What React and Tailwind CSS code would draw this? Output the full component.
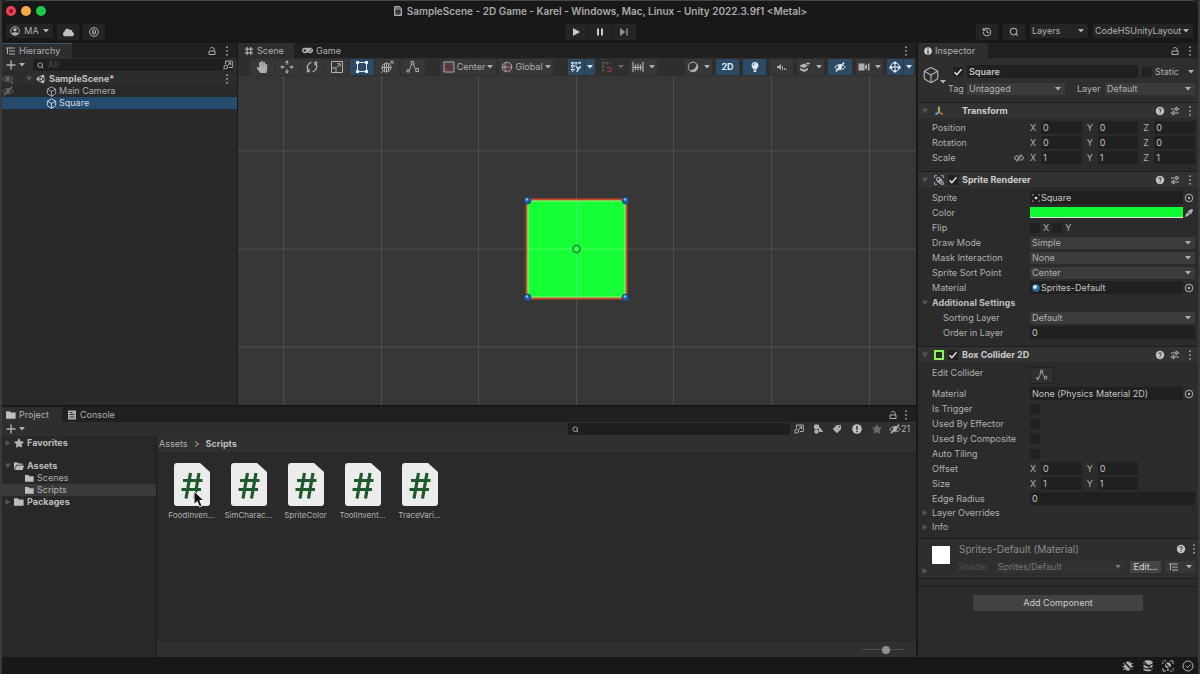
import React from "react";
import { Box, History, Search } from "lucide-react";
import { FaHandPaper, FaUnity, FaStar, FaGamepad, FaTag, FaLightbulb, FaEyeDropper, FaCloud } from "react-icons/fa";

const cx = (...c) => c.filter(Boolean).join(" ");

/* ---------- glyphs ---------- */

const Svg = ({ size = "size-3", box = "0 0 12 12", className, children }) => (
  <svg viewBox={box} className={cx("shrink-0", size, className)} fill="none" stroke="currentColor" strokeWidth="1" aria-hidden="true">
    {children}
  </svg>
);

const Caret = ({ className }) => (
  <Svg size="h-1 w-1.5" box="0 0 6 4" className={className}>
    <path d="M0 0h6L3 3.6z" fill="currentColor" stroke="none" />
  </Svg>
);

const Fold = ({ open, className }) => (
  <Svg size="size-1.5" box="0 0 6 6" className={cx("text-[#555555]", className)}>
    <path d={open ? "M0 .5h6L3 5.5z" : "M.5 0v6l5-3z"} fill="currentColor" stroke="none" />
  </Svg>
);

const Kebab = ({ className }) => (
  <Svg size="h-2.5 w-1" box="0 0 3 9" className={className}>
    <path d="M.8 .5h1.4v1.4H.8zM.8 3.8h1.4v1.4H.8zM.8 7.1h1.4v1.4H.8z" fill="currentColor" stroke="none" />
  </Svg>
);

const Lock = () => (
  <Svg size="size-2.5" box="0 0 10 10">
    <path d="M2 5h6v3.5H2z M7.2 5V3.2C7.2 1.2 3.4 1 3 2.6" />
  </Svg>
);

const Help = () => (
  <Svg size="size-2.5" box="0 0 10 10">
    <circle cx="5" cy="5" r="4.2" fill="#c4c4c4" stroke="none" />
    <path d="M3.7 3.9c0-1.7 2.7-1.6 2.6 0 0 .9-1.3 1-1.3 2.1M5 6.8v1" stroke="#2d2d2d" />
  </Svg>
);

const Preset = () => (
  <Svg size="size-2.5" box="0 0 10 10">
    <path d="M1 3h5.500M6 1v4L9 3zM9 7H3.500M4 5v4L1 7z" />
  </Svg>
);

const Target = () => (
  <Svg size="size-2.5" box="0 0 10 10">
    <circle cx="5" cy="5" r="3.8" />
    <circle cx="5" cy="5" r="1.2" fill="currentColor" stroke="none" />
  </Svg>
);

const Folder = ({ open, size = "size-2.5" }) => (
  <Svg size={size} box="0 0 10 10" className="text-[#bdbdbd]">
    {open ? (
      <path d="M0 8.6V1.4h3.6l1 1.2h3.8v1.2H2.2L.9 7.6zM2.8 4.6H10L8.6 9H.9z" fill="currentColor" stroke="none" />
    ) : (
      <path d="M0 1.2h3.8l1 1.3H9.6v6.2H0z" fill="currentColor" stroke="none" />
    )}
  </Svg>
);

const EyeOff = ({ size = "size-3" }) => (
  <Svg size={size} box="0 0 12 12">
    <path d="M.8 6.4C3 2.6 9 2.6 11.2 6 9 9.6 3 9.600 .8 6.400z" />
    <circle cx="6" cy="6" r="1.700" fill="currentColor" />
    <path d="M1.800 10.400 10.200 1.600" strokeWidth="1.400" />
  </Svg>
);

const EyePick = () => (
  <Svg>
    <path d="M.8 6C3 2.600 8.600 2.600 10.800 6 8.600 9 3 9 .8 6z" />
    <circle cx="5.800" cy="5.800" r="1.600" fill="currentColor" />
    <path d="M8.500 9h3M10 9v2" />
  </Svg>
);

const PickWindow = () => (
  <Svg size="size-2.5" box="0 0 10 10">
    <path d="M2.500 4V1h6.800v6.500H6M4.600 5.600 7.400 2.900M5.200 2.800h2.300V5" />
    <circle cx="2.800" cy="7" r="1.900" />
    <path d="M1.400 8.400 .2 9.700" />
  </Svg>
);

const Nodes = ({ size = "size-3.5" }) => (
  <Svg size={size} box="0 0 14 14">
    <path d="M2.500 10.500C4.500 10 4.800 6 5.500 3.500M7.500 3.500C8 7 9 9 11 9.800" />
    <path d="M5.200 1.500h2.600v2.600H5.200zM9.800 8.500h2.700v3H9.800zM1 9.800h2.200V12H1z" fill="#353535" />
  </Svg>
);

const HashGrid = () => (
  <Svg size="size-2.5" box="0 0 10 10">
    <path d="M3.200 1v8M6.800 1v8M1 3.200h8M1 6.800h8" strokeWidth="1.200" />
  </Svg>
);

const Lines = () => (
  <Svg size="size-2.5" box="0 0 10 10">
    <path d="M0 2h9M3 5h6M3 8h6M1.500 2v6" />
  </Svg>
);

const MoveIcon = () => (
  <Svg size="size-3.5" box="0 0 14 14">
    <path d="M7 4.800V2M7 9.200V12M4.800 7H2M9.200 7H12" />
    <path d="M7 .3 9 2.800H5zM7 13.700 9 11.200H5zM.3 7l2.500-2v4zM13.700 7l-2.500-2v4z" fill="currentColor" stroke="none" />
  </Svg>
);

const RotateIcon = () => (
  <Svg size="size-3.5" box="0 0 14 14">
    <path d="M4 11.500C.8 8.600 2 3.600 6.500 2.200M10 2.500c3.200 2.900 2 7.900-2.500 9.300M4 8.800v2.900H1.400M10 5.200V2.300h2.600" strokeWidth="1.200" />
  </Svg>
);

const ScaleIcon = () => (
  <Svg size="size-3.5" box="0 0 14 14">
    <path d="M1.500 1.500h11v11h-11zM1.500 8h4.500v4.500M6.500 7.500 10 4M7.300 3.700h3v3" />
  </Svg>
);

const RectIcon = () => (
  <Svg size="size-3.5" box="0 0 14 14" className="text-[#dfe9f2]">
    <path d="M2.500 2.500h9v9h-9z" />
    <path d="M1 1h3v3H1zM10 1h3v3h-3zM1 10h3v3H1zM10 10h3v3h-3z" fill="currentColor" stroke="none" />
  </Svg>
);

const TransformTool = () => (
  <Svg size="size-3.5" box="0 0 14 14">
    <circle cx="6.500" cy="7.500" r="4.500" />
    <path d="M2 7.500h9M6.500 3v9M4.500 4v7M8.500 4v7M1 13l2-2M10 4l2.500-2.500M10.500 1.300H13V4" />
  </Svg>
);

const PivotIcon = () => (
  <Svg>
    <path d="M1 1h10v10H1z" />
    <path d="M2.500 9.500 9.500 2.500M3 3h6v6H3z" stroke="#8c3b40" />
  </Svg>
);

const GlobeIcon = ({ hot = "#8c3b40" }) => (
  <Svg>
    <circle cx="6" cy="6" r="4.800" />
    <path d="M1.200 6h9.600M6 1.200c-3 3-3 6.600 0 9.600" />
    <path d="M6 1.200c3 3 3 6.600 0 9.600M6 8h4M7 6v4.500" stroke={hot} />
  </Svg>
);

const GridSnap = () => (
  <Svg className="text-[#dfe9f2]">
    <path d="M1 2h10M1 5h5M1 8.500h4M2.500 1v10M6 1v3M9.500 1v2" strokeDasharray="1.500 .8" strokeWidth="1.300" />
    <path d="M6.200 5.200 8.300 8.200 10.600 5.200M8.300 8.200 6.800 11" strokeWidth="1.400" />
  </Svg>
);

const GridMagnet = () => (
  <Svg className="text-[#6a6a6a]">
    <path d="M1 2h9M1 5.500h3M1 9h3M2 1v10M5.500 1v3" strokeDasharray="1.300 1" />
    <path d="M6 6.500h2.500c2.500 0 2.500 4 0 4H6" stroke="#8c3b40" strokeWidth="1.400" />
  </Svg>
);

const Increment = () => (
  <Svg>
    <path d="M1 1v10M3.500 3.500v6M6 2.500v7M8.500 3.500v6M11 1v10M1.500 6.500h9" strokeWidth="1.200" />
  </Svg>
);

const ShadeIcon = () => (
  <Svg>
    <circle cx="6" cy="6" r="4.800" />
    <path d="M9.500 2.800C9.600 6.500 7 9.300 2.800 9.300c2.600 2.500 7 1.600 8-2.300C11.200 5.500 10.700 3.800 9.500 2.800z" fill="currentColor" stroke="none" />
  </Svg>
);

const AudioIcon = () => (
  <Svg size="size-2.5" box="0 0 10 10">
    <path d="M0 4h1.500L4 2v6L1.500 6H0zM5 4h1v4H5zM7 6h1v2H7zM9 7h1v1H9z" fill="currentColor" stroke="none" />
  </Svg>
);

const FxIcon = () => (
  <Svg>
    <path d="M1 4.500 5 2.500l3 1.500v1.500L5 7 1 5.500zM1 7l4 1.500L9 7v2L5 11 1 9z" fill="currentColor" stroke="none" />
    <path d="M7 2.500h4M9 1v3.500" />
  </Svg>
);

const CameraIcon = () => (
  <Svg>
    <path d="M.5 2.500h6v7h-6zM7 5l2-2v6L7 7zM10 2.500h1.500v7H10z" fill="currentColor" stroke="none" />
  </Svg>
);

const GizmoIcon = () => (
  <Svg className="text-[#dfe9f2]">
    <circle cx="6" cy="6" r="4.300" />
    <path d="M6 1.500v9M1.500 6h9" />
    <circle cx="6" cy="1.800" r="1.400" fill="currentColor" stroke="none" />
    <circle cx="1.800" cy="6.500" r="1.500" fill="currentColor" stroke="none" />
    <circle cx="10.200" cy="6.500" r="1.500" fill="currentColor" stroke="none" />
    <circle cx="6" cy="10.300" r="1.400" fill="currentColor" stroke="none" />
  </Svg>
);

/* ---------- building blocks ---------- */

const ToolButton = ({ label, className, children, on, plain }) => (
  <button
    type="button"
    aria-label={label}
    className={cx(
      "flex h-4 shrink-0 items-center justify-center",
      on ? "bg-[#2c4a63] text-[#dfe9f2]" : plain ? "" : "bg-[#373737]",
      className
    )}
  >
    {children}
  </button>
);

const SplitTool = ({ label, on, plain, dim, className, children }) => (
  <div className="flex">
    <ToolButton label={label} on={on} plain={plain} className={cx("w-4", className)}>{children}</ToolButton>
    <ToolButton label={label + " options"} on={on} plain={plain} className={cx("w-[11px]", on && "border-l border-[#24394b]", dim && "text-[#666666]")}>
      <Caret />
    </ToolButton>
  </div>
);

const Select = ({ id, value, label, className, tone = "bg-[#3b3b3b]", pad = "pl-0.5" }) => (
  <div className={cx("relative flex h-3 items-center", tone, className)}>
    <select id={id} aria-label={label} className={cx("h-full w-full appearance-none truncate bg-transparent pr-2.5 outline-none", pad)}>
      <option>{value}</option>
    </select>
    <Caret className="pointer-events-none absolute right-1" />
  </div>
);

const Check = ({ id, label, checked }) => (
  <span className="relative flex size-2.5 shrink-0 items-center justify-center">
    <input id={id} aria-label={label} type="checkbox" defaultChecked={checked} className="peer size-full appearance-none bg-[#212121]" />
    <svg viewBox="0 0 10 10" className="pointer-events-none absolute hidden size-2.5 peer-checked:block" fill="none" stroke="#e4e4e4" strokeWidth="1.400">
      <path d="M1.500 5.200 3.800 7.600 8.500 2.200" />
    </svg>
  </span>
);

const Row = ({ label, id, sub, extra, children }) => (
  <div className="flex h-[15px] items-center pr-[3px] pl-3.5">
    <div className={cx("flex w-[98px] shrink-0 items-center justify-between", sub && "pl-[11px]")}>
      <label htmlFor={id} className="whitespace-nowrap">{label}</label>
      {extra}
    </div>
    {children}
  </div>
);

const Field = ({ id, label, value }) => (
  <input id={id} aria-label={label} defaultValue={value} className="h-[13px] w-full min-w-0 bg-[#202020] px-0.5 text-[#c4c4c4] outline-none" />
);

const Axes = ({ id, name, values }) => (
  <div className="grid flex-1 grid-cols-3 gap-[5px]">
    {values.map((v, i) => (
      <div key={i} className="flex items-center">
        <span className="w-[11px] shrink-0">{"XYZ"[i]}</span>
        <Field id={i === 0 ? id : undefined} label={name + " " + "XYZ"[i]} value={v} />
      </div>
    ))}
  </div>
);

const ObjectField = ({ id, value, icon }) => (
  <div className="flex min-w-0 flex-1 items-center">
    <div className="flex h-[13px] min-w-0 flex-1 items-center bg-[#202020] pl-0.5">
      {icon}
      <input id={id} defaultValue={value} className="w-full min-w-0 bg-transparent text-[#c4c4c4] outline-none" />
    </div>
    <button type="button" aria-label={"Pick " + value} className="flex w-3 justify-center"><Target /></button>
  </div>
);

const ComponentHeader = ({ title, icon, check }) => (
  <div className="flex h-4 items-center border-t border-[#1d1d1d] bg-[#323232] pr-[5px] pl-1">
    <button type="button" aria-label={"Fold " + title} className="flex w-3"><Fold open /></button>
    <span className="flex w-3.5 justify-start">{icon}</span>
    <span className="flex w-3.5">{check && <Check label={title + " enabled"} checked />}</span>
    <h2 className="flex-1 font-bold text-[#cccccc]">{title}</h2>
    <div className="flex items-center gap-[5px]">
      <button type="button" aria-label="Help"><Help /></button>
      <button type="button" aria-label="Presets"><Preset /></button>
      <button type="button" aria-label="More" className="ml-0.5 flex w-1.5 justify-center"><Kebab /></button>
    </div>
  </div>
);

const Tab = ({ icon, label, active, className }) => (
  <button type="button" role="tab" aria-selected={!!active} className={cx("flex h-[15px] items-center gap-[3px] px-1", active ? "bg-[#2e2e2e]" : "", className)}>
    {icon}
    {label}
  </button>
);

/* ---------- panels ---------- */

function TopBar() {
  return (
    <header className="rounded-t-md border-t border-[#454545] bg-[#181818]">
      <div className="grid h-5 grid-cols-[1fr_auto_1fr] items-center">
        <div className="flex gap-[5px] pl-1">
          <button type="button" aria-label="Close" className="flex size-2.5 items-center justify-center rounded-full bg-[#ee4457]">
            <span className="size-1 rounded-full bg-[#8c1020]" />
          </button>
          <button type="button" aria-label="Minimise" className="size-2.5 rounded-full bg-[#f6ac45]" />
          <button type="button" aria-label="Zoom" className="size-2.5 rounded-full bg-[#1fc74b]" />
        </div>
        <h1 className="flex items-center gap-1 text-[10px] font-semibold text-[#aaaaaa]">
          <Svg size="size-2.5" box="0 0 10 10">
            <path d="M1.500 .5H6.500L8.500 2.500v7h-7z" fill="#777777" />
            <path d="M3 5 5 3.800 7 5v2L5 8.200 3 7zM5 6v2M3 5l2 1 2-1" stroke="#222222" />
          </Svg>
          SampleScene - 2D Game - Karel - Windows, Mac, Linux - Unity 2022.3.9f1 &lt;Metal&gt;
        </h1>
      </div>
      <div className="grid h-[22px] grid-cols-[1fr_auto_1fr] items-center">
        <div className="flex gap-1 pl-1">
          <button type="button" className="flex h-3.5 w-[47px] items-center justify-between bg-[#242424] px-1">
            <Svg size="size-2.5" box="0 0 10 10">
              <circle cx="5" cy="5" r="4.300" />
              <circle cx="5" cy="3.800" r="1.800" fill="currentColor" stroke="none" />
              <path d="M1.500 7.500C3 5.800 7 5.800 8.500 7.500L5 9.500z" fill="currentColor" stroke="none" />
            </Svg>
            MA
            <Caret />
          </button>
          <ToolButton label="Cloud" plain className="h-3.5 w-[22px] bg-[#242424] text-[#c0c0c0]">
            <FaCloud className="size-[11px]" />
          </ToolButton>
          <ToolButton label="Version control" plain className="h-3.5 w-[22px] bg-[#242424]">
            <Svg size="size-2.5" box="0 0 10 10">
              <circle cx="5" cy="5" r="4.300" />
              <path d="M3.500 3.500 5 2.600l1.600.9v2.800L5 7.300l-1.500-1zM5 4.500v2" />
            </Svg>
          </ToolButton>
        </div>
        <div className="flex gap-px">
          <ToolButton label="Play" plain className="h-3.5 w-[23px] bg-[#242424]">
            <Svg size="size-2.5" box="0 0 10 10"><path d="M2 1v8l7-4z" fill="#c9c9c9" stroke="none" /></Svg>
          </ToolButton>
          <ToolButton label="Pause" plain className="h-3.5 w-[23px] bg-[#242424]">
            <Svg size="size-2.5" box="0 0 10 10"><path d="M2 1.500h2v7H2zM6 1.500h2v7H6z" fill="#c9c9c9" stroke="none" /></Svg>
          </ToolButton>
          <ToolButton label="Step" plain className="h-3.5 w-[23px] bg-[#242424]">
            <Svg size="size-2.5" box="0 0 10 10"><path d="M1 1v8l5.500-4zM7.300 1.300h1.400v7.400H7.300z" fill="#8f8f8f" stroke="none" /></Svg>
          </ToolButton>
        </div>
        <div className="flex justify-end gap-[5px] pr-[5px]">
          <ToolButton label="Undo history" plain className="h-3.5 w-[22px] bg-[#242424]"><History className="size-2.5" strokeWidth={2.500} /></ToolButton>
          <ToolButton label="Search" plain className="h-3.5 w-[22px] bg-[#242424]"><Search className="size-2.5" strokeWidth={2.500} /></ToolButton>
          <Select label="Layers" value="Layers" tone="bg-[#242424]" className="h-3.5 w-[58px]" />
          <Select label="Layout" value="CodeHSUnityLayout" tone="bg-[#242424]" className="h-3.5 w-[100px]" />
        </div>
      </div>
    </header>
  );
}

function Hierarchy() {
  return (
    <section className="flex w-[235px] shrink-0 flex-col bg-[#292929]">
      <div className="flex items-center bg-[#202020]">
        <Tab active icon={<Lines />} label="Hierarchy" className="w-[70px] border-t border-[#35566f] bg-[#2b3338]" />
        <div className="ml-auto flex items-center gap-2 pr-2"><Lock /><Kebab /></div>
      </div>
      <div className="flex h-3.5 items-center gap-2 bg-[#2e2e2e] px-1">
        <button type="button" aria-label="Create" className="flex items-center gap-[3px]">
          <Svg size="size-2.5" box="0 0 10 10"><path d="M5 .5v9M.5 5h9" strokeWidth="1.400" /></Svg>
          <Caret />
        </button>
        <div className="flex h-3 flex-1 items-center gap-1 bg-[#1f1f1f] pl-1">
          <Search className="size-[7px] shrink-0" strokeWidth={3} />
          <input aria-label="Search hierarchy" placeholder="All" className="w-full min-w-0 bg-transparent placeholder:text-[#4c4c4c] outline-none" />
          <PickWindow />
        </div>
      </div>
      <ul className="pt-px">
        <li className="flex h-3 items-center bg-[#2d2d2d] pr-2">
          <span className="flex w-6 text-[#666666]"><EyePick /></span>
          <Fold open className="mr-1" />
          <FaUnity className="mr-[3px] size-2.5 text-[#dddddd]" />
          <span className="font-bold text-[#c0c0c0]">SampleScene*</span>
          <Kebab className="ml-auto" />
        </li>
        <li className="flex h-3 items-center">
          <span className="flex w-11 text-[#666666]"><EyeOff /></span>
          <Box className="mr-0.5 size-[11px]" strokeWidth={2} />
          Main Camera
        </li>
        <li className="flex h-3 items-center bg-[#244b6d] pl-11 text-[#d0dbe4]">
          <Box className="mr-0.5 size-[11px]" strokeWidth={2} />
          Square
        </li>
      </ul>
    </section>
  );
}

function SceneCanvas() {
  const vs = [45.500, 143.500, 240.500, 338.500, 435.500, 533.500, 631.500];
  const hs = [75.500, 173.500, 271.500];
  const corners = [[289.500, 125], [387.500, 125], [289.500, 222], [387.500, 222]];
  return (
    <div className="relative min-h-0 flex-1 bg-[#373737]">
      <svg viewBox="0 0 678 330" preserveAspectRatio="xMidYMid slice" className="absolute inset-0 size-full" role="img" aria-label="Green square in the 2D scene">
        {vs.map((x) => <path key={x} d={`M${x} 0V330`} stroke="#4e4e4e" />)}
        {hs.map((y) => <path key={y} d={`M0 ${y}H678`} stroke="#4e4e4e" />)}
        <rect x="288.500" y="124" width="100" height="99" fill="#17ff37" stroke="#c8462a" strokeWidth="2" />
        <rect x="290" y="125.500" width="97" height="96" fill="none" stroke="#a5e878" />
        <path d="M338.500 126V221M291 173.500H386" stroke="#4bff5c" />
        <circle cx="338.500" cy="173.500" r="3.600" fill="none" stroke="#1f8f3a" strokeWidth="1.600" />
        {corners.map(([x, y]) => (
          <g key={x + "-" + y}>
            <circle cx={x} cy={y} r="3.500" fill="#1f5fa5" stroke="#1c3c63" strokeWidth=".8" />
            <circle cx={x - 0.600} cy={y - 1} r="1.200" fill="#8ec0ee" />
          </g>
        ))}
      </svg>
    </div>
  );
}

function Scene() {
  return (
    <section className="flex min-w-0 flex-1 flex-col">
      <div className="flex items-center bg-[#202020]">
        <Tab active icon={<HashGrid />} label="Scene" className="w-14 pl-1.5" />
        <Tab icon={<FaGamepad className="size-[11px]" />} label="Game" className="ml-1" />
        <Kebab className="mr-2 ml-auto" />
      </div>
      <div className="flex h-[18px] items-center justify-between bg-[#2e2e2e] pr-0.5 pl-3">
        <div className="flex items-center">
          <div className="flex gap-px">
            <ToolButton label="View tool" className="w-6"><FaHandPaper className="size-3" /></ToolButton>
            <ToolButton label="Move tool" className="w-6"><MoveIcon /></ToolButton>
            <ToolButton label="Rotate tool" className="w-6"><RotateIcon /></ToolButton>
            <ToolButton label="Scale tool" className="w-6"><ScaleIcon /></ToolButton>
            <ToolButton label="Rect tool" on className="w-6"><RectIcon /></ToolButton>
            <ToolButton label="Transform tool" className="w-6"><TransformTool /></ToolButton>
          </div>
          <ToolButton label="Edit collider" className="ml-0.5 w-6"><Nodes /></ToolButton>
          <ToolButton label="Tool handle position" className="ml-[15px] w-14 gap-0.5"><PivotIcon />Center<Caret /></ToolButton>
          <ToolButton label="Tool handle rotation" className="ml-[3px] w-[54px] gap-0.5"><GlobeIcon />Global<Caret /></ToolButton>
          <div className="ml-[15px] flex gap-1">
            <SplitTool label="Grid" on><GridSnap /></SplitTool>
            <SplitTool label="Grid snapping" plain dim><GridMagnet /></SplitTool>
            <SplitTool label="Increment snapping"><Increment /></SplitTool>
          </div>
        </div>
        <div className="flex items-center gap-1">
          <SplitTool label="Draw mode"><ShadeIcon /></SplitTool>
          <ToolButton label="2D view" on className="w-[23px] font-bold">2D</ToolButton>
          <ToolButton label="Scene lighting" on className="w-[23px]"><FaLightbulb className="size-2.5" /></ToolButton>
          <ToolButton label="Scene audio" className="w-[23px]"><AudioIcon /></ToolButton>
          <SplitTool label="Effects"><FxIcon /></SplitTool>
          <ToolButton label="Scene visibility" on className="w-6"><EyeOff /></ToolButton>
          <SplitTool label="Camera"><CameraIcon /></SplitTool>
          <SplitTool label="Gizmos" on><GizmoIcon /></SplitTool>
        </div>
      </div>
      <SceneCanvas />
    </section>
  );
}

function TreeRow({ icon, label, bold, fold, active, deep }) {
  return (
    <li className={cx("flex h-3 items-center gap-[3px]", deep ? "pl-[23px]" : "pl-[3px]", active && "bg-[#3a3a3a]")}>
      {fold && <Fold open={fold === "open"} />}
      {icon}
      <span className={bold ? "font-bold text-[#bdbdbd]" : ""}>{label}</span>
    </li>
  );
}

const files = ["FoodInven...", "SimCharac...", "SpriteColor", "ToolInvent...", "TraceVari..."];

function Project() {
  return (
    <section className="flex h-[250px] shrink-0 flex-col bg-[#2a2a2a]">
      <div className="flex items-center bg-[#202020]">
        <Tab active icon={<Folder />} label="Project" className="w-[60px]" />
        <Tab
          label="Console"
          className="ml-px"
          icon={
            <Svg size="size-2.5" box="0 0 10 10">
              <path d="M1 .5h8v9H1z" fill="#b0b0b0" stroke="none" />
              <path d="M2.500 2.500h3M2.500 4.500h5M2.500 7h5" stroke="#2a2a2a" />
            </Svg>
          }
        />
        <div className="ml-auto flex items-center gap-1.5 pr-2"><Lock /><Kebab /></div>
      </div>
      <div className="flex h-3.5 items-center justify-between bg-[#2e2e2e] px-1">
        <button type="button" aria-label="Create" className="flex items-center gap-[3px]">
          <Svg size="size-2.5" box="0 0 10 10"><path d="M5 .5v9M.5 5h9" strokeWidth="1.400" /></Svg>
          <Caret />
        </button>
        <div className="flex items-center">
          <div className="flex h-3 w-[222px] items-center bg-[#1f1f1f] pl-1">
            <Search className="size-[7px] shrink-0" strokeWidth={3} />
            <input aria-label="Search project" className="w-full min-w-0 bg-transparent outline-none" />
          </div>
          <div className="flex items-center gap-px">
            <ToolButton label="Open search" plain className="w-[18px]"><PickWindow /></ToolButton>
            <ToolButton label="Filter by type" plain className="w-[18px]">
              <Svg size="size-2.5" box="0 0 10 10"><path d="M1.500 1h4v3.500h-4zM6.500 7.500V3.500l3 4z" fill="currentColor" /><circle cx="3.500" cy="7.500" r="2.200" fill="currentColor" stroke="none" /></Svg>
            </ToolButton>
            <ToolButton label="Filter by label" plain className="w-[18px]"><FaTag className="size-2 -scale-x-100" /></ToolButton>
            <ToolButton label="Filter by log" plain className="w-5">
              <Svg size="size-2.5" box="0 0 10 10"><circle cx="5" cy="5" r="4.800" fill="#c0c0c0" stroke="none" /><path d="M5 2v3.700M5 6.800v1.400" stroke="#2a2a2a" strokeWidth="1.400" /></Svg>
            </ToolButton>
            <ToolButton label="Save search" plain className="w-[18px] text-[#6a6a6a]"><FaStar className="size-2.5" /></ToolButton>
            <ToolButton label="Hidden packages" plain className="w-[25px]"><EyeOff />21</ToolButton>
          </div>
        </div>
      </div>
      <div className="flex min-h-0 flex-1">
        <ul className="w-[154px] shrink-0 bg-[#282828] pt-px">
          <TreeRow fold="shut" bold icon={<FaStar className="size-2.5" />} label="Favorites" />
          <li className="h-[11px]" />
          <TreeRow fold="open" bold icon={<Folder open />} label="Assets" />
          <TreeRow deep icon={<Folder size="size-[9px]" />} label="Scenes" />
          <TreeRow deep active icon={<Folder size="size-[9px]" />} label="Scripts" />
          <TreeRow fold="shut" bold icon={<Folder />} label="Packages" />
        </ul>
        <div className="flex min-w-0 flex-1 flex-col border-l border-[#1c1c1c]">
          <nav className="flex h-4 items-center gap-1.5 bg-[#303030] px-0.5">
            <a href="#assets">Assets</a>
            <Svg size="size-1.5" box="0 0 6 6"><path d="M1 .5 4.500 3 1 5.500" /></Svg>
            <a href="#scripts" className="font-bold text-[#bdbdbd]">Scripts</a>
          </nav>
          <ul className="flex flex-1 flex-wrap gap-x-2 px-2.5 pt-[11px]">
            {files.map((f, i) => (
              <li key={f} className="relative flex w-[49px] flex-col items-center gap-[3px]">
                <svg viewBox="0 0 36 43" className="h-[43px] w-9" aria-hidden="true">
                  <path d="M3 0H26L36 9V40Q36 43 33 43H3Q0 43 0 40V3Q0 0 3 0Z" fill="#ececec" />
                  <path d="M16.500 10 12 35.500M25 10 20.500 35.500M9 17.500H28.500M7.500 26.500H27" fill="none" stroke="#1e5a2c" strokeWidth="3.200" />
                </svg>
                <span className="text-[8px] leading-3 whitespace-nowrap">{f}</span>
                {i === 0 && (
                  <svg viewBox="0 0 12 18" className="absolute top-[27px] left-[26px] h-[18px] w-3" aria-hidden="true">
                    <path d="M1 1V14.500L4.200 11.500 6.500 16.800 9 15.700 6.800 10.500H11z" fill="#111111" stroke="#ffffff" />
                  </svg>
                )}
              </li>
            ))}
          </ul>
          <div className="flex h-[15px] items-center justify-end bg-[#303030] pr-3">
            <input
              type="range"
              aria-label="Icon size"
              defaultValue="60"
              className="h-px w-[42px] appearance-none bg-[#4d4d4d] [&::-webkit-slider-thumb]:size-2 [&::-webkit-slider-thumb]:appearance-none [&::-webkit-slider-thumb]:rounded-full [&::-webkit-slider-thumb]:bg-[#8f8f8f]"
            />
          </div>
        </div>
      </div>
    </section>
  );
}

const transformIcon = (
  <Svg size="size-2.5" box="0 0 10 10">
    <path d="M5 6V1" stroke="#d7d35a" strokeWidth="1.500" />
    <path d="M5 6 1.500 8.500" stroke="#4fb3e8" strokeWidth="1.600" />
    <path d="M5 6l3.800 2.500" stroke="#e0573e" strokeWidth="1.600" />
    <path d="M5 .5v2" stroke="#5bd06a" strokeWidth="1.600" />
  </Svg>
);

const spriteRendererIcon = (
  <Svg size="size-2.5" box="0 0 10 10">
    <path d="M.6 3V.6H3M7 .6h2.400V3M9.400 7v2.400H7M3 9.400H.6V7" stroke="#9a9ad0" />
    <circle cx="4.500" cy="4.500" r="2" stroke="#d0d0d0" />
    <path d="M5 5h3v3H5z" stroke="#d0d0d0" />
  </Svg>
);

const boxColliderIcon = (
  <Svg size="size-2.5" box="0 0 10 10">
    <path d="M1 1h8v8H1z" fill="#1d3312" stroke="#8df25a" strokeWidth="2" />
  </Svg>
);

function Inspector() {
  return (
    <aside className="flex w-[280px] shrink-0 flex-col bg-[#2b2b2b]">
      <div className="flex items-center bg-[#202020]">
        <Tab
          active
          label="Inspector"
          className="w-[70px] pl-1.5"
          icon={
            <Svg size="size-2" box="0 0 10 10">
              <circle cx="5" cy="5" r="4.800" fill="#cfcfcf" stroke="none" />
              <path d="M5 1.800v1.400M5 4.300v4" stroke="#2a2a2a" strokeWidth="1.600" />
            </Svg>
          }
        />
        <div className="ml-auto flex items-center gap-2 pr-1.5"><Lock /><Kebab /></div>
      </div>

      <div className="flex h-11 bg-[#2e2e2e] pt-[7px] pl-1">
        <div className="flex h-[19px] w-[26px] shrink-0 items-end">
          <Box className="size-[18px]" strokeWidth={1.600} />
          <Caret />
        </div>
        <div className="flex flex-1 flex-col gap-[5px]">
          <div className="flex h-[13px] items-center gap-1 pr-1 pl-[5px]">
            <Check label="Active" checked />
            <input aria-label="Name" defaultValue="Square" className="h-[13px] min-w-0 flex-1 bg-[#202020] px-0.5 font-semibold text-[#c4c4c4] outline-none" />
            <span className="flex items-center gap-[3px]">
              <Check id="static" />
              <label htmlFor="static">Static</label>
              <Caret className="ml-1.5" />
            </span>
          </div>
          <div className="flex h-3 items-center pr-[3px]">
            <label htmlFor="tag" className="w-[19px]">Tag</label>
            <Select id="tag" value="Untagged" className="w-[98px]" />
            <label htmlFor="layer" className="ml-3 w-7">Layer</label>
            <Select id="layer" value="Default" className="min-w-0 flex-1" />
          </div>
        </div>
      </div>

      <ComponentHeader title="Transform" icon={transformIcon} />
      <div className="pt-0.5 pb-1.5">
        <Row label="Position" id="pos"><Axes id="pos" name="Position" values={[0, 0, 0]} /></Row>
        <Row label="Rotation" id="rot"><Axes id="rot" name="Rotation" values={[0, 0, 0]} /></Row>
        <Row
          label="Scale"
          id="scale"
          extra={
            <button type="button" aria-label="Constrain proportions" className="mr-1.5">
              <Svg size="size-2.5" box="0 0 10 10">
                <path d="M4.500 3H2.700a2 2 0 000 4H4.500M5.500 3h1.800a2 2 0 010 4H5.500M3.500 5h3M2.500 8.500 7.500 1.500" />
              </Svg>
            </button>
          }
        >
          <Axes id="scale" name="Scale" values={[1, 1, 1]} />
        </Row>
      </div>

      <ComponentHeader title="Sprite Renderer" icon={spriteRendererIcon} check />
      <div className="pt-[3px] pb-1.5">
        <Row label="Sprite" id="sprite">
          <ObjectField
            id="sprite"
            value="Square"
            icon={<Svg size="size-2" box="0 0 8 8" className="mr-px"><path d="M.5 2V.5H2M6 .5h1.500V2M7.500 6v1.500H6M2 7.500H.5V6" stroke="#777777" /><circle cx="4" cy="4" r="1.300" fill="#e0e0e0" stroke="none" /></Svg>}
          />
        </Row>
        <Row label="Color" id="color">
          <button id="color" type="button" aria-label="Color" className="h-[11px] flex-1 border-b border-[#d9f5dc] bg-[#10fb33]" />
          <button type="button" aria-label="Pick color" className="flex w-3 justify-center"><FaEyeDropper className="size-2" /></button>
        </Row>
        <Row label="Flip" id="flipx">
          <div className="flex items-center gap-[3px]">
            <Check id="flipx" />
            <label htmlFor="flipx">X</label>
            <Check id="flipy" />
            <label htmlFor="flipy">Y</label>
          </div>
        </Row>
        <Row label="Draw Mode" id="draw"><Select id="draw" value="Simple" className="flex-1" /></Row>
        <Row label="Mask Interaction" id="mask"><Select id="mask" value="None" className="flex-1" /></Row>
        <Row label="Sprite Sort Point" id="sort"><Select id="sort" value="Center" className="flex-1" /></Row>
        <Row label="Material" id="mat">
          <ObjectField
            id="mat"
            value="Sprites-Default"
            icon={<Svg size="size-2" box="0 0 8 8" className="mr-px"><circle cx="4" cy="4" r="3.800" fill="#2b6d9b" stroke="none" /><circle cx="3" cy="3" r="2" fill="#c4ecff" stroke="none" /></Svg>}
          />
        </Row>
        <button type="button" className="flex h-[15px] items-center gap-1 pl-1 font-bold text-[#bdbdbd]"><Fold open />Additional Settings</button>
        <Row sub label="Sorting Layer" id="sl"><Select id="sl" value="Default" className="flex-1" /></Row>
        <Row sub label="Order in Layer" id="ol"><Field id="ol" value="0" /></Row>
      </div>

      <ComponentHeader title="Box Collider 2D" icon={boxColliderIcon} check />
      <div className="pt-0.5 pb-1">
        <div className="flex h-[22px] items-center pl-3.5">
          <span className="w-[98px] pb-1">Edit Collider</span>
          <button type="button" aria-label="Edit Collider" className="flex h-[17px] w-6 items-center justify-center border border-[#1f1f1f] bg-[#303030]"><Nodes size="size-3" /></button>
        </div>
        <Row label="Material" id="pm"><ObjectField id="pm" value="None (Physics Material 2D)" /></Row>
        <Row label="Is Trigger" id="it"><Check id="it" /></Row>
        <Row label="Used By Effector" id="ue"><Check id="ue" /></Row>
        <Row label="Used By Composite" id="uc"><Check id="uc" /></Row>
        <Row label="Auto Tiling" id="at"><Check id="at" /></Row>
        <Row label="Offset" id="off"><Axes id="off" name="Offset" values={[0, 0]} /></Row>
        <Row label="Size" id="size"><Axes id="size" name="Size" values={[1, 1]} /></Row>
        <Row label="Edge Radius" id="er"><Field id="er" value="0" /></Row>
        <button type="button" className="flex h-3.5 items-center gap-1 pl-1"><Fold />Layer Overrides</button>
        <button type="button" className="flex h-3.5 items-center gap-1 pl-1"><Fold />Info</button>
      </div>

      <div className="flex h-[41px] border-y border-[#1d1d1d] bg-[#2e2e2e] pt-0.5">
        <div className="flex w-[37px] shrink-0 items-end pl-1"><Fold className="mb-1" /><span className="mb-3.5 ml-1 size-[18px] bg-white" /></div>
        <div className="flex flex-1 flex-col gap-[3px]">
          <div className="flex h-[15px] items-center pr-0.5 pl-1">
            <h2 className="flex-1 text-[10px] text-[#8c8c8c]">Sprites-Default (Material)</h2>
            <Help />
            <Kebab className="ml-1.5" />
          </div>
          <div className="flex h-[15px] items-center pr-[3px] pl-[3px]">
            <label htmlFor="shader" className="w-[38px] text-[#4f4f4f]">Shader</label>
            <Select id="shader" value="Sprites/Default" tone="bg-[#313131] text-[#777777]" className="min-w-0 flex-1" />
            <button type="button" className="ml-[5px] h-3 w-[31px] bg-[#454545] text-[#dddddd]">Edit...</button>
            <button type="button" aria-label="Shader options" className="ml-1 flex h-3 w-[30px] items-center justify-around bg-[#373737]"><Lines /><Caret /></button>
          </div>
        </div>
      </div>
      <div className="h-2 border-b border-[#1d1d1d]" />
      <div className="flex justify-center pt-2">
        <button type="button" className="h-4 w-[170px] bg-[#424242] text-[#cccccc]">Add Component</button>
      </div>
    </aside>
  );
}

function StatusBar() {
  return (
    <footer className="flex h-[17px] items-center justify-end gap-2 bg-[#181818] pr-1">
      <Svg>
        <path d="M3 3.500C4 1.500 8 1.500 9 3.500V8c-1 3-5 3-6 0zM1 3l2 1.500M11 3 9 4.500M.5 6.500H3M9 6.500h2.500M1 10l2-1.500M11 10 9 8.500" fill="#b0b0b0" />
        <path d="M1 1l10 10" stroke="#181818" strokeWidth="1.500" />
      </Svg>
      <Svg>
        <ellipse cx="6" cy="2.500" rx="4.500" ry="1.800" fill="#b0b0b0" />
        <path d="M1.500 4.500c2 2 7 2 9 0v2.200c-2 2-7 2-9 0zM1.500 8c2 2 7 2 9 0v2c-2 1.800-7 1.800-9 0z" fill="#b0b0b0" stroke="none" />
        <path d="M1 1l10 10" stroke="#181818" strokeWidth="1.200" />
      </Svg>
      <Svg>
        <path d="M1 4V1h3M8 1h3v3M11 8v3H8M4 11H1V8" />
        <circle cx="6" cy="5.300" r="2.500" fill="#b0b0b0" />
        <path d="M5 9h2v1.500H5z" fill="#b0b0b0" stroke="none" />
        <path d="M1 1l10 10" stroke="#181818" strokeWidth="1.200" />
      </Svg>
      <Svg>
        <circle cx="6" cy="6" r="5" />
        <path d="M3.800 6 5.500 7.600 8.300 4.600" />
      </Svg>
    </footer>
  );
}

export default function App() {
  return (
    <div className="flex min-h-screen flex-col overflow-hidden border-r-2 border-l-2 border-[#3a3a3a] bg-[#181818] font-['Inter','Liberation_Sans',sans-serif] text-[9px] leading-3 text-[#b0b0b0]">
      <TopBar />
      <main className="flex flex-1 gap-0.5">
        <div className="flex min-w-0 flex-1 flex-col gap-0.5">
          <div className="flex min-h-0 flex-1 gap-px">
            <Hierarchy />
            <Scene />
          </div>
          <Project />
        </div>
        <Inspector />
      </main>
      <StatusBar />
    </div>
  );
}
